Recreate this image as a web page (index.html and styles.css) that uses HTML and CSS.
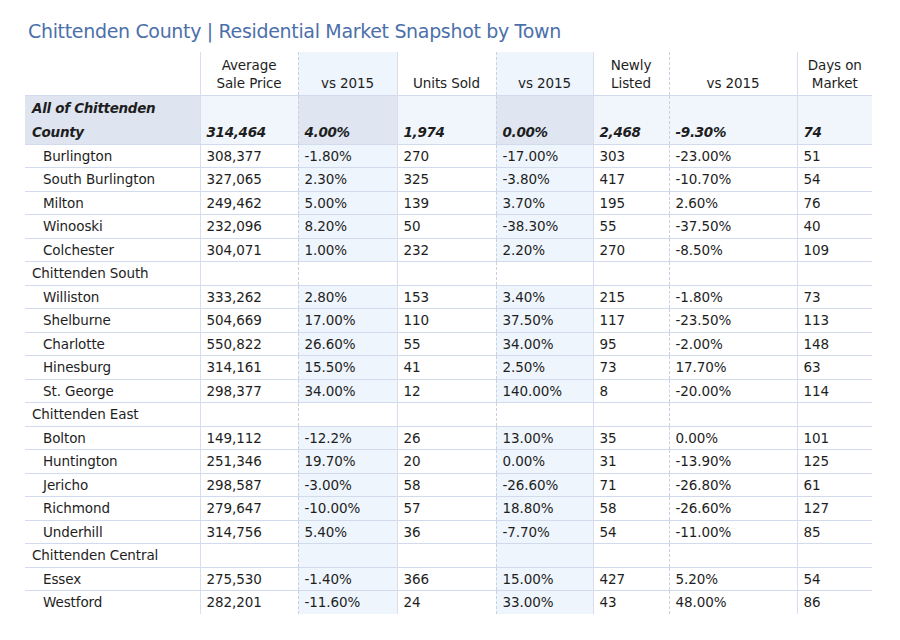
FILE: index.html
```html
<!DOCTYPE html>
<html>
<head>
<meta charset="utf-8">
<link rel="stylesheet" href="styles.css">
</head>
<body>
<div class="page">
  <h1 class="title">Chittenden County | Residential Market Snapshot by Town</h1>
  <table class="snap">
    <colgroup>
      <col class="c-name"><col class="c-avg"><col class="c-vs1"><col class="c-units"><col class="c-vs2"><col class="c-new"><col class="c-vs3"><col class="c-days">
    </colgroup>
    <thead>
      <tr>
        <th class="name"></th>
        <th class="solid">Average<br>Sale Price</th>
        <th class="dash vs">vs 2015</th>
        <th class="solid">Units Sold</th>
        <th class="dash vs">vs 2015</th>
        <th class="solid">Newly<br>Listed</th>
        <th class="dash">vs 2015</th>
        <th class="solid">Days on<br>Market</th>
      </tr>
    </thead>
    <tbody>
      <tr class="all">
        <td class="name"><div class="line1">All of Chittenden</div>County</td>
        <td class="solid">314,464</td>
        <td class="dash vs">4.00%</td>
        <td class="solid">1,974</td>
        <td class="dash vs">0.00%</td>
        <td class="solid">2,468</td>
        <td class="dash">-9.30%</td>
        <td class="solid">74</td>
      </tr>
      <tr><td class="name town">Burlington</td><td class="solid">308,377</td><td class="dash vs">-1.80%</td><td class="solid">270</td><td class="dash vs">-17.00%</td><td class="solid">303</td><td class="dash">-23.00%</td><td class="solid">51</td></tr>
      <tr><td class="name town">South Burlington</td><td class="solid">327,065</td><td class="dash vs">2.30%</td><td class="solid">325</td><td class="dash vs">-3.80%</td><td class="solid">417</td><td class="dash">-10.70%</td><td class="solid">54</td></tr>
      <tr><td class="name town">Milton</td><td class="solid">249,462</td><td class="dash vs">5.00%</td><td class="solid">139</td><td class="dash vs">3.70%</td><td class="solid">195</td><td class="dash">2.60%</td><td class="solid">76</td></tr>
      <tr><td class="name town">Winooski</td><td class="solid">232,096</td><td class="dash vs">8.20%</td><td class="solid">50</td><td class="dash vs">-38.30%</td><td class="solid">55</td><td class="dash">-37.50%</td><td class="solid">40</td></tr>
      <tr><td class="name town">Colchester</td><td class="solid">304,071</td><td class="dash vs">1.00%</td><td class="solid">232</td><td class="dash vs">2.20%</td><td class="solid">270</td><td class="dash">-8.50%</td><td class="solid">109</td></tr>
      <tr class="group"><td class="name">Chittenden South</td><td class="solid"></td><td class="dash"></td><td class="solid"></td><td class="dash"></td><td class="solid"></td><td class="dash"></td><td class="solid"></td></tr>
      <tr><td class="name town">Williston</td><td class="solid">333,262</td><td class="dash vs">2.80%</td><td class="solid">153</td><td class="dash vs">3.40%</td><td class="solid">215</td><td class="dash">-1.80%</td><td class="solid">73</td></tr>
      <tr><td class="name town">Shelburne</td><td class="solid">504,669</td><td class="dash vs">17.00%</td><td class="solid">110</td><td class="dash vs">37.50%</td><td class="solid">117</td><td class="dash">-23.50%</td><td class="solid">113</td></tr>
      <tr><td class="name town">Charlotte</td><td class="solid">550,822</td><td class="dash vs">26.60%</td><td class="solid">55</td><td class="dash vs">34.00%</td><td class="solid">95</td><td class="dash">-2.00%</td><td class="solid">148</td></tr>
      <tr><td class="name town">Hinesburg</td><td class="solid">314,161</td><td class="dash vs">15.50%</td><td class="solid">41</td><td class="dash vs">2.50%</td><td class="solid">73</td><td class="dash">17.70%</td><td class="solid">63</td></tr>
      <tr><td class="name town">St. George</td><td class="solid">298,377</td><td class="dash vs">34.00%</td><td class="solid">12</td><td class="dash vs">140.00%</td><td class="solid">8</td><td class="dash">-20.00%</td><td class="solid">114</td></tr>
      <tr class="group"><td class="name">Chittenden East</td><td class="solid"></td><td class="dash"></td><td class="solid"></td><td class="dash"></td><td class="solid"></td><td class="dash"></td><td class="solid"></td></tr>
      <tr><td class="name town">Bolton</td><td class="solid">149,112</td><td class="dash vs">-12.2%</td><td class="solid">26</td><td class="dash vs">13.00%</td><td class="solid">35</td><td class="dash">0.00%</td><td class="solid">101</td></tr>
      <tr><td class="name town">Huntington</td><td class="solid">251,346</td><td class="dash vs">19.70%</td><td class="solid">20</td><td class="dash vs">0.00%</td><td class="solid">31</td><td class="dash">-13.90%</td><td class="solid">125</td></tr>
      <tr><td class="name town">Jericho</td><td class="solid">298,587</td><td class="dash vs">-3.00%</td><td class="solid">58</td><td class="dash vs">-26.60%</td><td class="solid">71</td><td class="dash">-26.80%</td><td class="solid">61</td></tr>
      <tr><td class="name town">Richmond</td><td class="solid">279,647</td><td class="dash vs">-10.00%</td><td class="solid">57</td><td class="dash vs">18.80%</td><td class="solid">58</td><td class="dash">-26.60%</td><td class="solid">127</td></tr>
      <tr><td class="name town">Underhill</td><td class="solid">314,756</td><td class="dash vs">5.40%</td><td class="solid">36</td><td class="dash vs">-7.70%</td><td class="solid">54</td><td class="dash">-11.00%</td><td class="solid">85</td></tr>
      <tr class="group"><td class="name">Chittenden Central</td><td class="solid"></td><td class="dash vs"></td><td class="solid"></td><td class="dash vs"></td><td class="solid"></td><td class="dash"></td><td class="solid"></td></tr>
      <tr><td class="name town">Essex</td><td class="solid">275,530</td><td class="dash vs">-1.40%</td><td class="solid">366</td><td class="dash vs">15.00%</td><td class="solid">427</td><td class="dash">5.20%</td><td class="solid">54</td></tr>
      <tr class="last"><td class="name town">Westford</td><td class="solid">282,201</td><td class="dash vs">-11.60%</td><td class="solid">24</td><td class="dash vs">33.00%</td><td class="solid">43</td><td class="dash">48.00%</td><td class="solid">86</td></tr>
    </tbody>
  </table>
</div>
</body>
</html>
```

FILE: styles.css
```css
html, body {
  margin: 0;
  padding: 0;
  background: #ffffff;
}
body {
  font-family: "DejaVu Sans", Verdana, sans-serif;
  color: #1e1e1e;
}
.page {
  width: 900px;
  height: 640px;
  padding: 18px 0 0 25px;
  box-sizing: border-box;
}
.title {
  margin: 0 0 0 3px;
  font-weight: normal;
  font-size: 19px;
  line-height: 26px;
  color: #4b70aa;
  letter-spacing: -0.33px;
}
.snap {
  margin-top: 8px;
  border-collapse: collapse;
  table-layout: fixed;
  width: 847px;
  font-size: 13.5px;
  letter-spacing: -0.1px;
}
.c-name { width: 175px; }
.c-avg { width: 98px; }
.c-vs1 { width: 99px; }
.c-units { width: 99px; }
.c-vs2 { width: 97px; }
.c-new { width: 76px; }
.c-vs3 { width: 128px; }
.c-days { width: 75px; }

th, td {
  padding: 0 0 0 6px;
  text-align: left;
  vertical-align: middle;
  white-space: nowrap;
}
th {
  font-weight: normal;
  text-align: center;
  vertical-align: bottom;
  line-height: 18px;
  height: 43px;
  padding: 0 0 3px 0;
  box-sizing: border-box;
  border-bottom: 1px solid #d2daee;
}
.solid { border-left: 1px solid #d9ddf0; }
.dash { border-left: 1px dashed #c9d0e2; }
.vs { background: #eef5fc; }

tbody td {
  height: 22.5px;
  line-height: 18px;
  border-bottom: 1px solid #d2daee;
}
tbody tr.last td { border-bottom: none; }
td.name { padding-left: 7px; }
td.town { padding-left: 18px; }

tr.all td {
  height: 48px;
  font-weight: bold;
  font-style: italic;
  background: #f1f6fc;
  vertical-align: bottom;
  line-height: 24px;
  padding-bottom: 0;
  letter-spacing: -0.3px;
}
tr.all td.name { background: #dee5f1; padding-left: 7px; }
tr.all td.vs { background: #dfe6f2; }
```
